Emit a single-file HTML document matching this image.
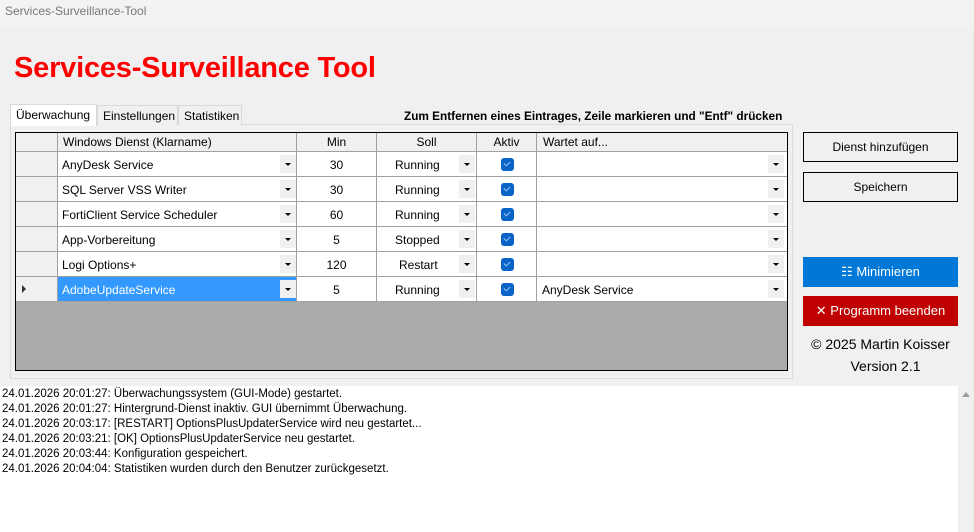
<!DOCTYPE html>
<html><head><meta charset="utf-8"><style>
*{box-sizing:border-box;margin:0;padding:0}
body{width:974px;height:532px;background:#f0f0f0;font-family:"Liberation Sans",sans-serif;font-size:12px;color:#000;position:relative;overflow:hidden}
.a{position:absolute}
.tb{left:0;top:0;width:974px;height:26px;background:#f3f3f3;color:#777;font-size:12px;padding:4px 0 0 5px}
.title{left:14px;top:52px;color:#f00;font-weight:bold;font-size:29px;letter-spacing:-0.2px}
.tab{top:105px;height:20px;border:1px solid #d9d9d9;border-bottom:none;background:#f0f0f0;padding:3px 0 0 5px;font-size:12px}
.panel{left:10px;top:124px;width:783px;height:255px;border:1px solid #dcdcdc;background:#f0f0f0}
.grid{left:15px;top:132px;width:773px;height:239px;border:1px solid #000;background:#ababab;overflow:hidden}
.row{position:absolute;left:0;width:771px;height:25px}
.c{position:absolute;top:0;height:25px;border-right:1px solid #a0a0a0;border-bottom:1px solid #a0a0a0;background:#fff;line-height:26px;white-space:nowrap}
.hdr .c{background:#f0f0f0;height:19px;line-height:19px;border-bottom:1px solid #a0a0a0}
.rh{background:#f0f0f0!important;border-right:1px solid #a0a0a0}
.dd{position:absolute;top:3px;width:16px;height:18px;background:#f0f0f0}
.dd:after{content:"";position:absolute;left:5px;top:8px;border-left:3px solid transparent;border-right:3px solid transparent;border-top:3px solid #000}
.cb{position:absolute;left:24px;top:6px;width:13px;height:13px;background:#0a64c8;border-radius:3px}
.cb:after{content:"";position:absolute;left:3px;top:3px;width:5px;height:3px;border-left:1px solid #9cc3ee;border-bottom:1px solid #9cc3ee;transform:rotate(-45deg)}
.btn{left:803px;width:155px;height:30px;border:1px solid #000;background:#f0f0f0;text-align:center;line-height:28px;font-size:12px}
.log{left:0;top:386px;width:958px;height:146px;background:#fff;padding:1px 0 0 2px;line-height:15px;font-size:11.5px}
.sb{left:958px;top:386px;width:16px;height:146px;background:#f0f0f0}
</style></head><body>
<div class="a tb">Services-Surveillance-Tool</div>
<div class="a title">Services-Surveillance Tool</div>
<div class="a panel"></div>
<div class="a tab" style="left:10px;top:104px;width:87px;height:22px;background:#fff;border-color:#d9d9d9">Überwachung</div>
<div class="a tab" style="left:97px;width:81px">Einstellungen</div>
<div class="a tab" style="left:178px;width:64px">Statistiken</div>
<div class="a" style="left:404px;top:109px;font-weight:bold;font-size:11.8px">Zum Entfernen eines Eintrages, Zeile markieren und "Entf" drücken</div>
<div class="a grid">
 <div class="row hdr" style="top:0;height:19px">
  <div class="c" style="left:0;width:42px"></div>
  <div class="c" style="left:42px;width:239px;padding-left:5px">Windows Dienst (Klarname)</div>
  <div class="c" style="left:281px;width:80px;text-align:center">Min</div>
  <div class="c" style="left:361px;width:100px;text-align:center">Soll</div>
  <div class="c" style="left:461px;width:60px;text-align:center">Aktiv</div>
  <div class="c" style="left:521px;width:250px;padding-left:6px;border-right:none">Wartet auf...</div>
 </div>
 <div class="row" style="top:19px"><div class="c rh" style="left:0;width:42px"></div><div class="c" style="left:42px;width:239px;padding-left:4px">AnyDesk Service<div class="dd" style="left:222px"></div></div><div class="c" style="left:281px;width:80px;text-align:center">30</div><div class="c" style="left:361px;width:100px;padding-left:18px">Running<div class="dd" style="left:82px"></div></div><div class="c" style="left:461px;width:60px"><div class="cb"></div></div><div class="c" style="left:521px;width:250px;border-right:none"><div class="dd" style="left:231px"></div></div></div>
 <div class="row" style="top:44px"><div class="c rh" style="left:0;width:42px"></div><div class="c" style="left:42px;width:239px;padding-left:4px">SQL Server VSS Writer<div class="dd" style="left:222px"></div></div><div class="c" style="left:281px;width:80px;text-align:center">30</div><div class="c" style="left:361px;width:100px;padding-left:18px">Running<div class="dd" style="left:82px"></div></div><div class="c" style="left:461px;width:60px"><div class="cb"></div></div><div class="c" style="left:521px;width:250px;border-right:none"><div class="dd" style="left:231px"></div></div></div>
 <div class="row" style="top:69px"><div class="c rh" style="left:0;width:42px"></div><div class="c" style="left:42px;width:239px;padding-left:4px">FortiClient Service Scheduler<div class="dd" style="left:222px"></div></div><div class="c" style="left:281px;width:80px;text-align:center">60</div><div class="c" style="left:361px;width:100px;padding-left:18px">Running<div class="dd" style="left:82px"></div></div><div class="c" style="left:461px;width:60px"><div class="cb"></div></div><div class="c" style="left:521px;width:250px;border-right:none"><div class="dd" style="left:231px"></div></div></div>
 <div class="row" style="top:94px"><div class="c rh" style="left:0;width:42px"></div><div class="c" style="left:42px;width:239px;padding-left:4px">App-Vorbereitung<div class="dd" style="left:222px"></div></div><div class="c" style="left:281px;width:80px;text-align:center">5</div><div class="c" style="left:361px;width:100px;padding-left:18px">Stopped<div class="dd" style="left:82px"></div></div><div class="c" style="left:461px;width:60px"><div class="cb"></div></div><div class="c" style="left:521px;width:250px;border-right:none"><div class="dd" style="left:231px"></div></div></div>
 <div class="row" style="top:119px"><div class="c rh" style="left:0;width:42px"></div><div class="c" style="left:42px;width:239px;padding-left:4px">Logi Options+<div class="dd" style="left:222px"></div></div><div class="c" style="left:281px;width:80px;text-align:center">120</div><div class="c" style="left:361px;width:100px;padding-left:22px">Restart<div class="dd" style="left:82px"></div></div><div class="c" style="left:461px;width:60px"><div class="cb"></div></div><div class="c" style="left:521px;width:250px;border-right:none"><div class="dd" style="left:231px"></div></div></div>
 <div class="row" style="top:144px"><div class="c rh" style="left:0;width:42px"><div style="position:absolute;left:6px;top:8px;border-top:4px solid transparent;border-bottom:4px solid transparent;border-left:4px solid #333"></div></div><div class="c" style="left:42px;width:239px;padding-left:4px;background:#3399ff;color:#fff">AdobeUpdateService<div class="dd" style="left:222px"></div></div><div class="c" style="left:281px;width:80px;text-align:center">5</div><div class="c" style="left:361px;width:100px;padding-left:18px">Running<div class="dd" style="left:82px"></div></div><div class="c" style="left:461px;width:60px"><div class="cb"></div></div><div class="c" style="left:521px;width:250px;border-right:none;padding-left:5px">AnyDesk Service<div class="dd" style="left:231px"></div></div></div>
</div>
<div class="a btn" style="top:132px">Dienst hinzufügen</div>
<div class="a btn" style="top:172px">Speichern</div>
<div class="a btn" style="top:257px;background:#0078d7;border-color:#0078d7;color:#fff;font-size:13px">☷ Minimieren</div>
<div class="a btn" style="top:296px;background:#c00000;border-color:#c00000;color:#fff;font-size:13px">✕ Programm beenden</div>
<div class="a" style="left:803px;top:336px;width:155px;text-align:center;font-size:14px">© 2025 Martin Koisser</div>
<div class="a" style="left:803px;top:358px;width:165px;text-align:center;font-size:14px">Version 2.1</div>
<div class="a log">24.01.2026 20:01:27: Überwachungssystem (GUI-Mode) gestartet.<br>24.01.2026 20:01:27: Hintergrund-Dienst inaktiv. GUI übernimmt Überwachung.<br>24.01.2026 20:03:17: [RESTART] OptionsPlusUpdaterService wird neu gestartet...<br>24.01.2026 20:03:21: [OK] OptionsPlusUpdaterService neu gestartet.<br>24.01.2026 20:03:44: Konfiguration gespeichert.<br>24.01.2026 20:04:04: Statistiken wurden durch den Benutzer zurückgesetzt.</div>
<div class="a sb"><div style="position:absolute;left:4px;top:6px;border-left:4px solid transparent;border-right:4px solid transparent;border-bottom:5px solid #a0a0a0"></div></div>
</body></html>
